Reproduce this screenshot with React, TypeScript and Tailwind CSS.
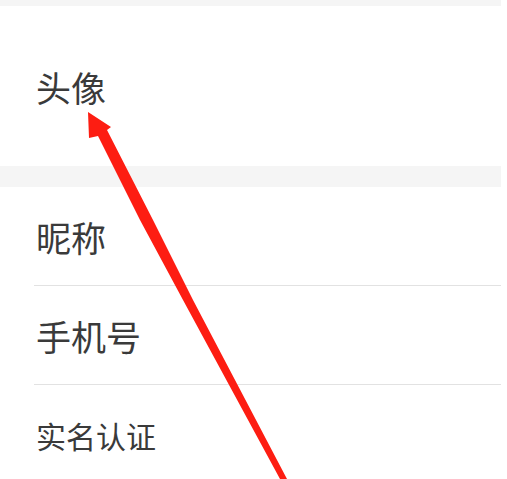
const rowText = "text-[#3a3a3a] leading-none";

function Row({ label, size, divider }: { label: string; size: string; divider?: boolean }) {
  return (
    <div className="relative flex h-[99px] items-center pl-9">
      <span className={`${rowText} ${size}`}>{label}</span>
      {divider && <div className="absolute bottom-0 left-[34px] right-0 h-px bg-[#e2e2e2]" />}
    </div>
  );
}

export default function App() {
  return (
    <div
      className="relative h-[479px] w-[507px] overflow-hidden bg-white"
      style={{ fontFamily: '"Noto Sans CJK SC", "Noto Sans", sans-serif' }}
    >
      <div className="w-[501px]">
        <div className="h-[6px] bg-[#f5f5f5]" />
        <div className="flex h-[160px] items-center pl-9">
          <span className={`${rowText} text-[35px]`}>头像</span>
        </div>
        <div className="h-[21px] bg-[#f5f5f5]" />
        <Row label="昵称" size="text-[35px]" divider />
        <Row label="手机号" size="text-[35px]" divider />
        <Row label="实名认证" size="text-[30px]" />
      </div>

      {/* red annotation arrow */}
      <svg className="pointer-events-none absolute inset-0" width="507" height="479" viewBox="0 0 507 479">
        <polygon
          points="88,112 111,127 107,130 153,220 193,300 287,479 280,479 183,300 140,220 98,136 89,138"
          fill="#fd1d12"
        />
      </svg>
    </div>
  );
}
